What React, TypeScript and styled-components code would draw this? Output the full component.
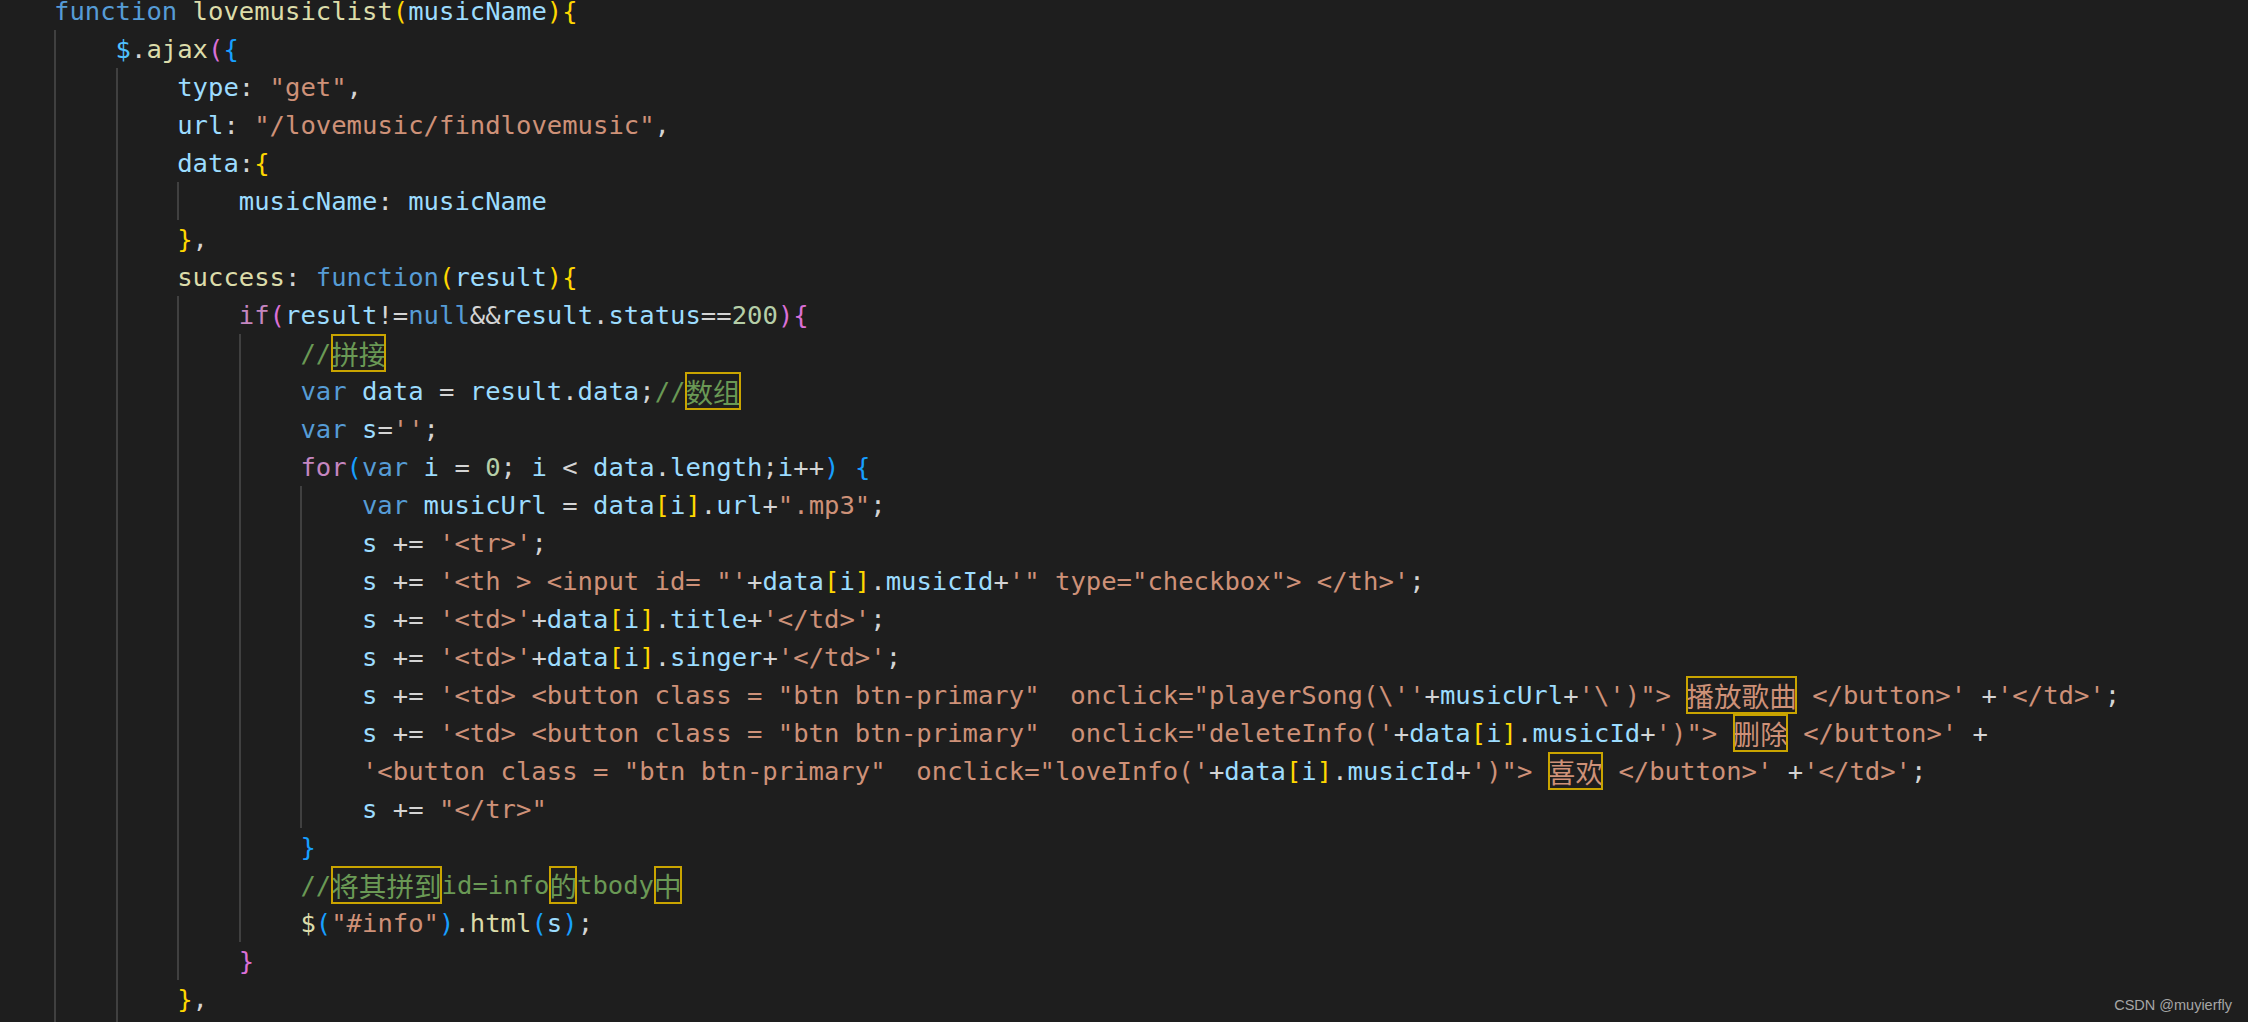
import React from "react";
import styled, { createGlobalStyle } from "styled-components";

const GlobalStyle = createGlobalStyle`
  html, body {
    margin: 0;
    padding: 0;
    background: #1e1e1e;
  }
`;

type Kind =
  | "kw"
  | "ctl"
  | "fn"
  | "v"
  | "c"
  | "str"
  | "num"
  | "com"
  | "p"
  | "b1"
  | "b2"
  | "b3";

const palette: Record<Kind, string> = {
  kw: "#569cd6",
  ctl: "#c586c0",
  fn: "#dcdcaa",
  v: "#9cdcfe",
  c: "#4fc1ff",
  str: "#ce9178",
  num: "#b5cea8",
  com: "#6a9955",
  p: "#d4d4d4",
  b1: "#ffd700",
  b2: "#da70d6",
  b3: "#179fff",
};

type Tok = [Kind, string];
type LineDef = { indent: number; toks: Tok[] };

const Editor = styled.div`
  position: relative;
  width: 2248px;
  height: 1022px;
  overflow: hidden;
  background: #1e1e1e;
`;

const Lines = styled.div`
  display: flex;
  flex-direction: column;
  margin-top: -8px;
  padding-left: 54px;
  font-family: "DejaVu Sans Mono", "Liberation Mono", monospace;
  font-size: 25.58px;
  line-height: 38px;
  white-space: pre;
`;

const Row = styled.div`
  display: flex;
  height: 38px;
`;

const Guide = styled.span`
  flex: none;
  width: 4ch;
  height: 38px;
  box-sizing: border-box;
  border-left: 2px solid #404040;
`;

const Code = styled.span`
  flex: none;
  display: block;
  height: 38px;
`;

const Token = styled.span<{ $kind: Kind }>`
  color: ${(p) => palette[p.$kind]};
`;

const Wide = styled.span`
  display: inline-block;
  vertical-align: top;
  height: 38px;
  line-height: 38px;
  font-family: "Noto Sans CJK SC", sans-serif;
  font-size: 27.6px;
  outline: 2px solid #c9a400;
  outline-offset: -2px;
`;

const Watermark = styled.div`
  position: absolute;
  right: 16px;
  bottom: 9px;
  font-family: "Liberation Sans", Arial, sans-serif;
  font-size: 14.5px;
  color: #a6a6a6;
  white-space: nowrap;
`;

const dataI: Tok[] = [
  ["v", "data"],
  ["b1", "["],
  ["v", "i"],
  ["b1", "]"],
  ["p", "."],
];

const lines: LineDef[] = [
  {
    indent: 0,
    toks: [
      ["kw", "function"],
      ["p", " "],
      ["fn", "lovemusiclist"],
      ["b1", "("],
      ["v", "musicName"],
      ["b1", ")"],
      ["b1", "{"],
    ],
  },
  {
    indent: 1,
    toks: [
      ["c", "$"],
      ["p", "."],
      ["fn", "ajax"],
      ["b2", "("],
      ["b3", "{"],
    ],
  },
  {
    indent: 2,
    toks: [
      ["v", "type"],
      ["p", ": "],
      ["str", '"get"'],
      ["p", ","],
    ],
  },
  {
    indent: 2,
    toks: [
      ["v", "url"],
      ["p", ": "],
      ["str", '"/lovemusic/findlovemusic"'],
      ["p", ","],
    ],
  },
  {
    indent: 2,
    toks: [
      ["v", "data"],
      ["p", ":"],
      ["b1", "{"],
    ],
  },
  {
    indent: 3,
    toks: [
      ["v", "musicName"],
      ["p", ": "],
      ["v", "musicName"],
    ],
  },
  {
    indent: 2,
    toks: [
      ["b1", "}"],
      ["p", ","],
    ],
  },
  {
    indent: 2,
    toks: [
      ["fn", "success"],
      ["p", ": "],
      ["kw", "function"],
      ["b1", "("],
      ["v", "result"],
      ["b1", ")"],
      ["b1", "{"],
    ],
  },
  {
    indent: 3,
    toks: [
      ["ctl", "if"],
      ["b2", "("],
      ["v", "result"],
      ["p", "!="],
      ["kw", "null"],
      ["p", "&&"],
      ["v", "result"],
      ["p", "."],
      ["v", "status"],
      ["p", "=="],
      ["num", "200"],
      ["b2", ")"],
      ["b2", "{"],
    ],
  },
  { indent: 4, toks: [["com", "//拼接"]] },
  {
    indent: 4,
    toks: [
      ["kw", "var"],
      ["p", " "],
      ["v", "data"],
      ["p", " = "],
      ["v", "result"],
      ["p", "."],
      ["v", "data"],
      ["p", ";"],
      ["com", "//数组"],
    ],
  },
  {
    indent: 4,
    toks: [
      ["kw", "var"],
      ["p", " "],
      ["v", "s"],
      ["p", "="],
      ["str", "''"],
      ["p", ";"],
    ],
  },
  {
    indent: 4,
    toks: [
      ["ctl", "for"],
      ["b3", "("],
      ["kw", "var"],
      ["p", " "],
      ["v", "i"],
      ["p", " = "],
      ["num", "0"],
      ["p", "; "],
      ["v", "i"],
      ["p", " < "],
      ["v", "data"],
      ["p", "."],
      ["v", "length"],
      ["p", ";"],
      ["v", "i"],
      ["p", "++"],
      ["b3", ")"],
      ["p", " "],
      ["b3", "{"],
    ],
  },
  {
    indent: 5,
    toks: [
      ["kw", "var"],
      ["p", " "],
      ["v", "musicUrl"],
      ["p", " = "],
      ...dataI,
      ["v", "url"],
      ["p", "+"],
      ["str", '".mp3"'],
      ["p", ";"],
    ],
  },
  {
    indent: 5,
    toks: [
      ["v", "s"],
      ["p", " += "],
      ["str", "'<tr>'"],
      ["p", ";"],
    ],
  },
  {
    indent: 5,
    toks: [
      ["v", "s"],
      ["p", " += "],
      ["str", `'<th > <input id= "'`],
      ["p", "+"],
      ...dataI,
      ["v", "musicId"],
      ["p", "+"],
      ["str", `'" type="checkbox"> </th>'`],
      ["p", ";"],
    ],
  },
  {
    indent: 5,
    toks: [
      ["v", "s"],
      ["p", " += "],
      ["str", "'<td>'"],
      ["p", "+"],
      ...dataI,
      ["v", "title"],
      ["p", "+"],
      ["str", "'</td>'"],
      ["p", ";"],
    ],
  },
  {
    indent: 5,
    toks: [
      ["v", "s"],
      ["p", " += "],
      ["str", "'<td>'"],
      ["p", "+"],
      ...dataI,
      ["v", "singer"],
      ["p", "+"],
      ["str", "'</td>'"],
      ["p", ";"],
    ],
  },
  {
    indent: 5,
    toks: [
      ["v", "s"],
      ["p", " += "],
      ["str", `'<td> <button class = "btn btn-primary"  onclick="playerSong(\\''`],
      ["p", "+"],
      ["v", "musicUrl"],
      ["p", "+"],
      ["str", `'\\')"> 播放歌曲 </button>'`],
      ["p", " +"],
      ["str", "'</td>'"],
      ["p", ";"],
    ],
  },
  {
    indent: 5,
    toks: [
      ["v", "s"],
      ["p", " += "],
      ["str", `'<td> <button class = "btn btn-primary"  onclick="deleteInfo('`],
      ["p", "+"],
      ...dataI,
      ["v", "musicId"],
      ["p", "+"],
      ["str", `')"> 删除 </button>'`],
      ["p", " +"],
    ],
  },
  {
    indent: 5,
    toks: [
      ["str", `'<button class = "btn btn-primary"  onclick="loveInfo('`],
      ["p", "+"],
      ...dataI,
      ["v", "musicId"],
      ["p", "+"],
      ["str", `')"> 喜欢 </button>'`],
      ["p", " +"],
      ["str", "'</td>'"],
      ["p", ";"],
    ],
  },
  {
    indent: 5,
    toks: [
      ["v", "s"],
      ["p", " += "],
      ["str", '"</tr>"'],
    ],
  },
  { indent: 4, toks: [["b3", "}"]] },
  { indent: 4, toks: [["com", "//将其拼到id=info的tbody中"]] },
  {
    indent: 4,
    toks: [
      ["fn", "$"],
      ["b3", "("],
      ["str", '"#info"'],
      ["b3", ")"],
      ["p", "."],
      ["fn", "html"],
      ["b3", "("],
      ["v", "s"],
      ["b3", ")"],
      ["p", ";"],
    ],
  },
  { indent: 3, toks: [["b2", "}"]] },
  {
    indent: 2,
    toks: [
      ["b1", "}"],
      ["p", ","],
    ],
  },
  { indent: 2, toks: [] },
];

const CJK = /([\u3400-\u9fff]+)/;

function renderText(text: string) {
  return text
    .split(CJK)
    .filter((s) => s.length > 0)
    .map((part, i) =>
      CJK.test(part) ? <Wide key={i}>{part}</Wide> : <React.Fragment key={i}>{part}</React.Fragment>
    );
}

function CodeLine({ line }: { line: LineDef }) {
  return (
    <Row>
      {Array.from({ length: line.indent }).map((_, i) => (
        <Guide key={i} />
      ))}
      <Code>
        {line.toks.map(([kind, text], i) => (
          <Token key={i} $kind={kind}>
            {renderText(text)}
          </Token>
        ))}
      </Code>
    </Row>
  );
}

export default function App() {
  return (
    <>
      <GlobalStyle />
      <Editor>
        <Lines>
          {lines.map((l, i) => (
            <CodeLine key={i} line={l} />
          ))}
        </Lines>
        <Watermark>CSDN @muyierfly</Watermark>
      </Editor>
    </>
  );
}
